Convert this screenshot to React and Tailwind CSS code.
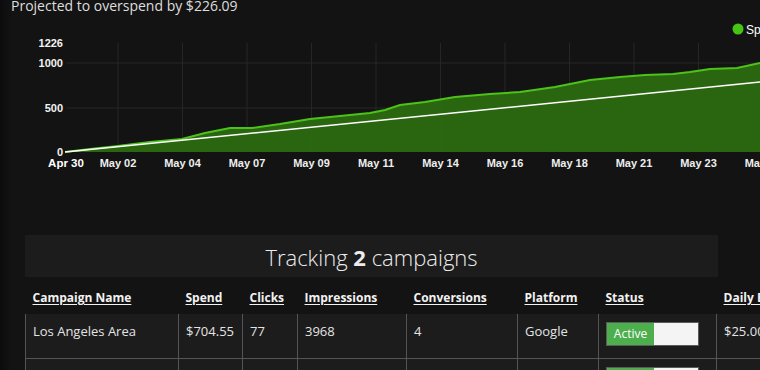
import React from 'react';

const spendPoints = [
    [65, 152], [90, 149], [118, 146], [150, 142], [182, 139], [205, 133], [230, 128], [252, 128],
    [280, 124], [310, 119], [340, 116], [370, 113], [385, 110], [400, 105], [425, 102], [455, 97],
    [490, 94], [520, 92], [555, 87], [590, 80], [620, 77], [645, 75], [673, 74], [690, 72],
    [710, 69], [737, 68], [760, 63],
];

const xTicks = [
    { x: 118, label: 'May 02' }, { x: 182.5, label: 'May 04' }, { x: 247, label: 'May 07' },
    { x: 311.5, label: 'May 09' }, { x: 376, label: 'May 11' }, { x: 440.5, label: 'May 14' },
    { x: 505, label: 'May 16' }, { x: 569.5, label: 'May 18' }, { x: 634, label: 'May 21' },
    { x: 698.5, label: 'May 23' }, { x: 763, label: 'May 25' },
];

const yTicks = [
    { y: 43, label: '1226' }, { y: 63, label: '1000' }, { y: 108, label: '500' }, { y: 152, label: '0' },
];

const campaigns = [
    { name: 'Los Angeles Area', spend: '$704.55', clicks: '77', impressions: '3968', conversions: '4', platform: 'Google', budget: '$25.00' },
    { name: 'Orange County Area', spend: '$521.54', clicks: '61', impressions: '3125', conversions: '3', platform: 'Google', budget: '$25.00' },
];

const SpendChart = () => {
    const line = spendPoints.map(p => p.join(',')).join(' ');
    const area = `65,152 ${line} 760,152`;

    return (
        <svg width="760" height="206" className="block">
            <g transform="translate(0,-14)" fontFamily="'Liberation Sans', Arial, sans-serif">
                {/* grid */}
                {[63, 108].map(y => (
                    <line key={y} x1="66" x2="760" y1={y} y2={y} stroke="#262626" strokeWidth="1" />
                ))}
                {xTicks.map(t => (
                    <line key={t.label} x1={t.x} x2={t.x} y1="43" y2="152" stroke="#262626" strokeWidth="1" />
                ))}

                {/* spend area */}
                <polygon points={area} fill="#2b6a10" fillOpacity="0.95" />
                <polyline points={line} fill="none" stroke="#4cc21a" strokeWidth="2" />

                {/* projection */}
                <line x1="65" y1="152" x2="760" y2="82" stroke="#ffffff" strokeWidth="1.5" />

                {/* axes labels */}
                {yTicks.map(t => (
                    <text key={t.label} x="63" y={t.y + 4} textAnchor="end" fontSize="11" fontWeight="700" fill="#f2f2f2">
                        {t.label}
                    </text>
                ))}
                <text x="66" y="167" textAnchor="middle" fontSize="11.5" fontWeight="700" fill="#ffffff">Apr 30</text>
                {xTicks.map(t => (
                    <text key={t.label} x={t.x} y="167" textAnchor="middle" fontSize="11" fontWeight="700" fill="#eeeeee">
                        {t.label}
                    </text>
                ))}

                {/* legend */}
                <circle cx="738" cy="29" r="5.5" fill="#45c414" />
                <text x="746" y="33.5" fontSize="12" fill="#ffffff">Spend</text>
            </g>
        </svg>
    );
};

const StatusToggle = () => (
    <div className="flex w-[93px] h-[24px] border border-[#5a5a5a] bg-[#f4f4f4]">
        <div className="w-[47px] h-full bg-[#4cae4c] text-white text-[12px] flex items-center justify-center">Active</div>
        <div className="flex-1 h-full bg-[#f4f4f4]" />
    </div>
);

export default function App() {
    const headers = ['Campaign Name', 'Spend', 'Clicks', 'Impressions', 'Conversions', 'Platform', 'Status', 'Daily Budget'];
    const cell = "border-l border-b border-[#555] align-top pt-[8px] pl-[7px] text-[13px] text-[#e4e4e4] h-[44px] whitespace-nowrap overflow-hidden";

    return (
        <div className="w-[760px] h-[370px] overflow-hidden bg-[linear-gradient(90deg,#0c0c0c,#131313_12px)] font-['Open_Sans',sans-serif]">
            {/* 标题 */}
            <div className="h-[14px] pl-[11px] flow-root">
                <p className="mt-[-4px] text-[14px] leading-[20px] text-[#dedede] whitespace-nowrap">Projected to overspend by $226.09</p>
            </div>

            <SpendChart />

            {/* 活动列表 */}
            <div className="mt-[15px] ml-[25px] w-[693px] h-[42px] bg-[#1c1c1c] flex items-center justify-center">
                <h2 className="text-[22px] font-light text-[#ececec] leading-none pt-[2px]">
                    Tracking <span className="font-bold">2</span> campaigns
                </h2>
            </div>

            <table className="mt-[5px] ml-[25px] w-[820px] table-fixed border-collapse">
                <colgroup>
                    <col className="w-[153px]" />
                    <col className="w-[64px]" />
                    <col className="w-[55px]" />
                    <col className="w-[109px]" />
                    <col className="w-[111px]" />
                    <col className="w-[81px]" />
                    <col className="w-[118px]" />
                    <col className="w-[129px]" />
                </colgroup>
                <thead>
                    <tr className="h-[32px]">
                        {headers.map(h => (
                            <th key={h} className="text-left pl-[7px] align-middle text-[12px] font-bold text-[#f2f2f2] underline underline-offset-2 whitespace-nowrap">
                                {h}
                            </th>
                        ))}
                    </tr>
                </thead>
                <tbody>
                    {campaigns.map(c => (
                        <tr key={c.name} className="bg-[#1c1c1c]">
                            <td className={cell}>{c.name}</td>
                            <td className={cell}>{c.spend}</td>
                            <td className={cell}>{c.clicks}</td>
                            <td className={cell}>{c.impressions}</td>
                            <td className={cell}>{c.conversions}</td>
                            <td className={cell}>{c.platform}</td>
                            <td className={cell}><StatusToggle /></td>
                            <td className={cell}>{c.budget}</td>
                        </tr>
                    ))}
                </tbody>
            </table>
        </div>
    );
}
